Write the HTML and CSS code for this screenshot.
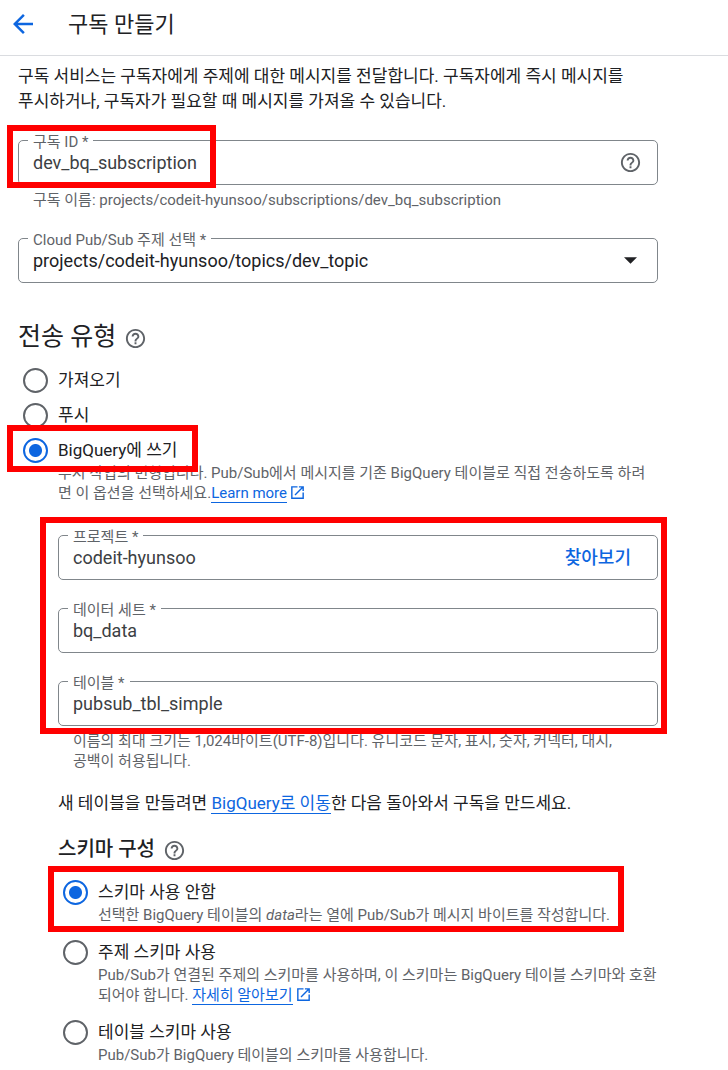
FILE: index.html
```html
<!DOCTYPE html>
<html lang="ko">
<head>
  <meta charset="UTF-8">
  <meta name="viewport" content="width=device-width, initial-scale=1.0">
  <title>구독 만들기</title>
  <link rel="stylesheet" href="styles.css">
</head>
<body>

  <svg class="sprite" aria-hidden="true">
    <symbol id="icon-help" viewBox="0 0 24 24">
      <path d="M11 18h2v-2h-2v2zm1-16C6.48 2 2 6.48 2 12s4.48 10 10 10 10-4.48 10-10S17.52 2 12 2zm0 18c-4.41 0-8-3.59-8-8s3.59-8 8-8 8 3.59 8 8-3.59 8-8 8zm0-14c-2.21 0-4 1.79-4 4h2c0-1.1.9-2 2-2s2 .9 2 2c0 2-3 1.75-3 5h2c0-2.25 3-2.5 3-5 0-2.21-1.79-4-4-4z"/>
    </symbol>
    <symbol id="icon-open" viewBox="0 0 24 24">
      <path d="M19 19H5V5h7V3H3v18h18v-9h-2v7zM14 3v2h3.6l-9.8 9.8 1.4 1.4L19 6.4V10h2V3h-7z"/>
    </symbol>
  </svg>

  <header class="topbar">
    <button class="icon-btn back-btn" type="button" aria-label="뒤로">
      <svg viewBox="0 0 24 24"><path d="M20 11H7.83l5.59-5.59L12 4l-8 8 8 8 1.41-1.41L7.83 13H20v-2z"/></svg>
    </button>
    <h1>구독 만들기</h1>
  </header>

  <main>
    <form>
      <p class="intro">구독 서비스는 구독자에게 주제에 대한 메시지를 전달합니다. 구독자에게 즉시 메시지를 푸시하거나, 구독자가 필요할 때 메시지를 가져올 수 있습니다.</p>

      <div class="field">
        <label for="sub-id">구독 ID *</label>
        <input type="text" id="sub-id" value="dev_bq_subscription">
        <button class="icon-btn" type="button" aria-label="도움말"><svg class="help"><use href="#icon-help"/></svg></button>
        <span class="mark mark-id"></span>
      </div>
      <p class="hint">구독 이름: projects/codeit-hyunsoo/subscriptions/dev_bq_subscription</p>

      <div class="field topic">
        <label for="topic">Cloud Pub/Sub 주제 선택 *</label>
        <select id="topic">
          <option>projects/codeit-hyunsoo/topics/dev_topic</option>
        </select>
        <svg class="caret" viewBox="0 0 12 6"><path d="M0 0h12L6 6z"/></svg>
      </div>

      <div class="heading">
        <h2>전송 유형</h2>
        <button class="icon-btn" type="button" aria-label="도움말"><svg class="help"><use href="#icon-help"/></svg></button>
      </div>

      <div class="options delivery">
        <div class="option">
          <input type="radio" name="delivery" id="pull">
          <label for="pull">가져오기</label>
        </div>
        <div class="option">
          <input type="radio" name="delivery" id="push">
          <label for="push">푸시</label>
        </div>
        <div class="option">
          <input type="radio" name="delivery" id="bigquery" checked>
          <label for="bigquery">BigQuery에 쓰기</label>
          <p>푸시 작업의 변형입니다. Pub/Sub에서 메시지를 기존 BigQuery 테이블로 직접 전송하도록 하려면 이 옵션을 선택하세요.<a href="#">Learn more</a><svg class="open"><use href="#icon-open"/></svg></p>
          <span class="mark mark-bigquery"></span>
        </div>
      </div>

      <div class="nested">
        <div class="table-fields">
          <div class="field">
            <label for="project">프로젝트 *</label>
            <input type="text" id="project" value="codeit-hyunsoo">
            <button class="browse" type="button">찾아보기</button>
          </div>
          <div class="field">
            <label for="dataset">데이터 세트 *</label>
            <input type="text" id="dataset" value="bq_data">
          </div>
          <div class="field">
            <label for="table">테이블 *</label>
            <input type="text" id="table" value="pubsub_tbl_simple">
          </div>
          <span class="mark mark-table"></span>
        </div>
        <p class="hint">이름의 최대 크기는 1,024바이트(UTF-8)입니다. 유니코드 문자, 표시, 숫자, 커넥터, 대시, 공백이 허용됩니다.</p>

        <p class="note">새 테이블을 만들려면 <a href="#">BigQuery로 이동</a>한 다음 돌아와서 구독을 만드세요.</p>

        <div class="heading">
          <h3>스키마 구성</h3>
          <button class="icon-btn" type="button" aria-label="도움말"><svg class="help"><use href="#icon-help"/></svg></button>
        </div>

        <div class="options schema">
          <div class="option">
            <input type="radio" name="schema" id="no-schema" checked>
            <label for="no-schema">스키마 사용 안함</label>
            <p>선택한 BigQuery 테이블의 <em>data</em>라는 열에 Pub/Sub가 메시지 바이트를 작성합니다.</p>
            <span class="mark mark-schema"></span>
          </div>
          <div class="option">
            <input type="radio" name="schema" id="topic-schema">
            <label for="topic-schema">주제 스키마 사용</label>
            <p>Pub/Sub가 연결된 주제의 스키마를 사용하며, 이 스키마는 BigQuery 테이블 스키마와 호환되어야 합니다. <a href="#">자세히 알아보기</a><svg class="open"><use href="#icon-open"/></svg></p>
          </div>
          <div class="option">
            <input type="radio" name="schema" id="table-schema">
            <label for="table-schema">테이블 스키마 사용</label>
            <p>Pub/Sub가 BigQuery 테이블의 스키마를 사용합니다.</p>
          </div>
        </div>
      </div>
    </form>
  </main>

</body>
</html>
```
FILE: styles.css
```css
* {
  box-sizing: border-box;
}

body {
  margin: 0;
  font-family: Roboto, "Noto Sans CJK KR", sans-serif;
  font-size: 17px;
  line-height: 25px;
  color: #202124;
  background: #fff;
}

h1, h2, h3, p {
  margin: 0;
  font-weight: 400;
}

button, input, select {
  margin: 0;
  padding: 0;
  border: none;
  background: none;
  font: inherit;
  color: inherit;
}

button {
  cursor: pointer;
}

a {
  color: #0d66e0;
  text-decoration: none;
  border-bottom: 1px solid #0d66e0;
}

svg {
  display: block;
  fill: currentColor;
}

.sprite {
  display: none;
}

.topbar {
  display: flex;
  align-items: center;
  gap: 30px;
  height: 56px;
  padding: 0 8px 7px;
  border-bottom: 1px solid #dadce0;
}

.topbar h1 {
  font-size: 22px;
}

.icon-btn {
  flex: none;
  color: #5f6368;
}

.back-btn {
  color: #0d66e0;
}

.back-btn svg {
  width: 30px;
  height: 30px;
}

.help {
  width: 23px;
  height: 23px;
}

main {
  padding: 8px 70px 5px 18px;
}

.intro {
  margin-bottom: 26px;
  word-break: keep-all;
}

/* outlined text fields */
.field {
  position: relative;
  display: flex;
  align-items: center;
  height: 45px;
  padding: 0 15px 0 14px;
  border: 1px solid #80868b;
  border-radius: 5px;
}

.field label {
  position: absolute;
  top: -9px;
  left: 9px;
  padding: 0 5px;
  font-size: 15px;
  line-height: 20px;
  color: #5f6368;
  background: #fff;
}

.field input,
.field select {
  flex: 1;
  min-width: 0;
  outline: none;
  font-size: 18px;
  color: #3c4043;
}

.field select {
  appearance: none;
  color: #202124;
}

.caret {
  width: 13px;
  height: 7px;
  margin-right: 5px;
}

.browse {
  margin-right: 11px;
  font-size: 18px;
  font-weight: 500;
  color: #0d66e0;
}

.hint {
  margin-top: 5px;
  padding: 0 15px;
  font-size: 15px;
  line-height: 20px;
  word-break: keep-all;
  color: #5f6368;
}

.topic {
  margin-top: 28px;
}

.heading {
  display: flex;
  align-items: center;
  gap: 8px;
}

.heading .help {
  margin-top: 2px;
}

.heading h2 {
  font-size: 25px;
  line-height: 30px;
}

.heading h3 {
  font-size: 20px;
  font-weight: 500;
}

.topic + .heading {
  margin: 39px 0 16px;
}

/* radio groups */
.options {
  display: grid;
}

.delivery {
  gap: 10px;
}

.schema {
  gap: 15px;
}

.option {
  position: relative;
  display: grid;
  grid-template-columns: 25px 1fr;
  column-gap: 10px;
  padding-left: 5px;
}

.option input {
  appearance: none;
  width: 25px;
  height: 25px;
  border: 2px solid #5f6368;
  border-radius: 50%;
}

.option input:checked {
  border-color: #0d66e0;
  background: radial-gradient(circle, #0d66e0 6px, transparent 7px);
}

.option p {
  grid-column: 2;
  font-size: 15px;
  line-height: 20px;
  color: #5f6368;
}

.open {
  display: inline-block;
  width: 17px;
  height: 17px;
  margin-left: 2px;
  color: #0d66e0;
  vertical-align: -3px;
}

.nested {
  margin-top: 32px;
  padding-left: 40px;
}

.table-fields {
  position: relative;
  display: grid;
  gap: 28px;
}

.note {
  margin-top: 20px;
}

.note + .heading {
  margin: 21px 0 18px;
}

/* red callout frames drawn over the form */
.mark {
  position: absolute;
  border: 6px solid #f00;
  pointer-events: none;
}

.mark-id {
  top: -16px;
  left: -12px;
  width: 209px;
  height: 63px;
}

.mark-bigquery {
  top: -13px;
  left: -11px;
  width: 191px;
  height: 47px;
}

.mark-table {
  top: -18px;
  right: -9px;
  bottom: -8px;
  left: -18px;
}

.mark-schema {
  top: -14px;
  left: -10px;
  width: 576px;
  height: 66px;
}
```
